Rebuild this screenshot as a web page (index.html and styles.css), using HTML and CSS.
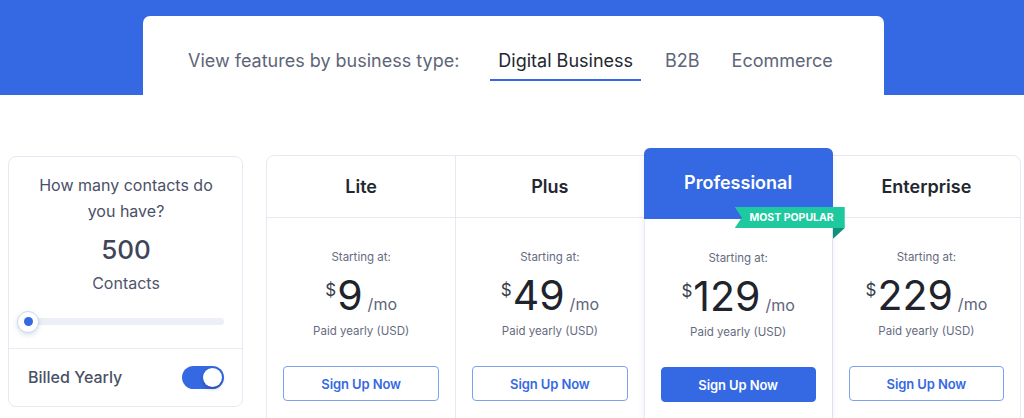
FILE: index.html
```html
<!DOCTYPE html>
<html lang="en">
<head>
<meta charset="utf-8">
<title>Pricing</title>
<link rel="stylesheet" href="styles.css">
</head>
<body>
<header class="hero">
  <div class="tabs-card">
    <span class="tabs-label">View features by business type:</span>
    <nav class="tabs">
      <a class="tab active">Digital Business</a>
      <a class="tab">B2B</a>
      <a class="tab">Ecommerce</a>
    </nav>
  </div>
</header>
<main class="pricing">
  <aside class="contacts-card">
    <div class="contacts-top">
      <p class="question">How many contacts do you have?</p>
      <div class="count">500</div>
      <div class="count-label">Contacts</div>
      <div class="slider"><span class="thumb"><span class="dot"></span></span></div>
    </div>
    <div class="billing">
      <span class="billing-label">Billed Yearly</span>
      <span class="toggle"><span class="knob"></span></span>
    </div>
  </aside>
  <section class="plans">
    <div class="plan">
      <div class="plan-head"><h3>Lite</h3></div>
      <div class="plan-body">
        <div class="starting">Starting at:</div>
        <div class="price"><span class="cur">$</span><span class="amount">9</span><span class="per">/mo</span></div>
        <div class="paid">Paid yearly (USD)</div>
        <a class="btn">Sign Up Now</a>
      </div>
    </div>
    <div class="plan">
      <div class="plan-head"><h3>Plus</h3></div>
      <div class="plan-body">
        <div class="starting">Starting at:</div>
        <div class="price"><span class="cur">$</span><span class="amount">49</span><span class="per">/mo</span></div>
        <div class="paid">Paid yearly (USD)</div>
        <a class="btn">Sign Up Now</a>
      </div>
    </div>
    <div class="plan featured">
      <div class="plan-head"><h3>Professional</h3>
        <span class="ribbon">MOST POPULAR</span>
        <span class="ribbon-fold"></span>
      </div>
      <div class="plan-body">
        <div class="starting">Starting at:</div>
        <div class="price"><span class="cur">$</span><span class="amount">129</span><span class="per">/mo</span></div>
        <div class="paid">Paid yearly (USD)</div>
        <a class="btn btn-solid">Sign Up Now</a>
      </div>
    </div>
    <div class="plan">
      <div class="plan-head"><h3>Enterprise</h3></div>
      <div class="plan-body">
        <div class="starting">Starting at:</div>
        <div class="price"><span class="cur">$</span><span class="amount">229</span><span class="per">/mo</span></div>
        <div class="paid">Paid yearly (USD)</div>
        <a class="btn">Sign Up Now</a>
      </div>
    </div>
  </section>
</main>
</body>
</html>
```

FILE: styles.css
```css
* { box-sizing: border-box; }
html, body { margin: 0; padding: 0; background: #fff; }
body {
  font-family: Inter, Roboto, "Liberation Sans", sans-serif;
  color: #23272f;
  width: 1024px;
  height: 418px;
  overflow: hidden;
}

.hero {
  background: #3569e3;
  height: 95px;
  padding-top: 16px;
}
.tabs-card {
  margin-left: 143px;
  width: 741px;
  height: 79px;
  background: #fff;
  border-radius: 7px 7px 0 0;
  display: flex;
  align-items: flex-start;
  padding: 33px 0 0 45px;
}
.tabs-label {
  font-size: 18px;
  line-height: 24px;
  color: #5e6579;
  margin-right: 31px;
}
.tabs { display: flex; gap: 16px; }
.tab {
  font-size: 18px;
  line-height: 24px;
  color: #5e6579;
  padding: 0 8px 6px;
  border-bottom: 2px solid transparent;
}
.tab.active { color: #23272f; border-bottom-color: #3569e3; }

.pricing {
  display: flex;
  align-items: flex-start;
  padding: 60px 0 0 8px;
  gap: 23px;
}

.contacts-card {
  width: 235px;
  border: 1px solid #e6e9f3;
  border-radius: 8px;
  margin-top: 1px;
}
.contacts-top {
  padding: 15px 18px 23px 19px;
  border-bottom: 1px solid #e9ecf5;
  text-align: center;
}
.question {
  margin: 0;
  padding: 0 4px;
  font-size: 16px;
  line-height: 26px;
  color: #4a5066;
}
.count {
  margin-top: 10px;
  font-size: 26px;
  line-height: 32px;
  font-weight: 500;
  color: #3f4559;
}
.count-label {
  margin-top: 5px;
  font-size: 16px;
  line-height: 24px;
  color: #50566b;
}
.slider {
  position: relative;
  margin-top: 23px;
  height: 7px;
  border-radius: 4px;
  background: #eceff6;
}
.thumb {
  position: absolute;
  left: -11px;
  top: -7.5px;
  width: 22px;
  height: 22px;
  border-radius: 50%;
  background: #fff;
  border: 1px solid #cbd8f6;
  box-shadow: 0 2px 5px rgba(60, 80, 130, 0.18);
  display: flex;
  align-items: center;
  justify-content: center;
}
.dot {
  width: 9px;
  height: 9px;
  border-radius: 50%;
  background: #3569e3;
}
.billing {
  height: 57px;
  display: flex;
  align-items: center;
  justify-content: space-between;
  padding: 0 18px 1px 19px;
}
.billing-label {
  font-size: 16px;
  font-weight: 500;
  color: #4a5066;
}
.toggle {
  position: relative;
  width: 42px;
  height: 23px;
  border-radius: 12px;
  background: #3569e3;
}
.knob {
  position: absolute;
  right: 2px;
  top: 2px;
  width: 19px;
  height: 19px;
  border-radius: 50%;
  background: #fff;
  box-shadow: 0 2px 4px rgba(0, 0, 0, 0.25);
}

.plans {
  width: 755px;
  display: grid;
  grid-template-columns: repeat(4, 1fr);
  border: 1px solid #e6e9f3;
  border-radius: 8px 8px 0 0;
  height: 280px;
}
.plan { border-left: 1px solid #e6e9f3; position: relative; }
.plan:first-child { border-left: none; }
.plan-head {
  height: 62px;
  border-bottom: 1px solid #e6e9f3;
  display: flex;
  align-items: center;
  justify-content: center;
  position: relative;
}
.plan-head h3 {
  margin: 0;
  font-size: 18px;
  font-weight: 600;
  color: #23272f;
}
.featured { z-index: 2; box-shadow: 0 0 6px rgba(90, 110, 160, 0.12); }
.featured .plan-head {
  margin: -8px -1px 0 -1px;
  height: 71px;
  background: #3569e3;
  border-bottom: none;
  border-radius: 6px 6px 0 0;
  padding-bottom: 3px;
}
.featured .plan-head h3 { color: #fff; }
.ribbon {
  position: absolute;
  right: -12px;
  bottom: -9px;
  height: 21px;
  width: 110px;
  background: #1ec99f;
  color: #fff;
  font-size: 10.5px;
  font-weight: 700;
  display: flex;
  align-items: center;
  justify-content: flex-end;
  padding-right: 11px;
  clip-path: polygon(0 0, 100% 0, 100% 100%, 0 100%, 7px 50%);
}
.ribbon-fold {
  position: absolute;
  right: -12px;
  bottom: -20px;
  width: 12px;
  height: 11px;
  background: #10917a;
  clip-path: polygon(0 0, 100% 0, 0 100%);
}

.plan-body {
  padding: 31px 16px 0;
  text-align: center;
}
.starting {
  font-size: 11.5px;
  line-height: 16px;
  color: #666c80;
}
.price {
  margin-top: 1px;
  height: 48px;
  line-height: 48px;
  color: #1f232c;
  white-space: nowrap;
}
.cur {
  font-size: 17px;
  vertical-align: 14px;
  color: #3a3f4d;
  margin-right: 1px;
}
.amount { font-size: 41px; }
.per {
  font-size: 16px;
  color: #5e6579;
  margin-left: 5px;
}
.paid {
  margin-top: 9px;
  font-size: 11.5px;
  line-height: 16px;
  color: #666c80;
}
.btn {
  margin-top: 27px;
  display: flex;
  align-items: center;
  justify-content: center;
  height: 35px;
  border: 1px solid #7ea1f0;
  border-radius: 4px;
  font-size: 13px;
  font-weight: 600;
  letter-spacing: -0.1px;
  color: #3569e3;
}
.btn-solid { background: #3569e3; border-color: #3569e3; color: #fff; }
```
